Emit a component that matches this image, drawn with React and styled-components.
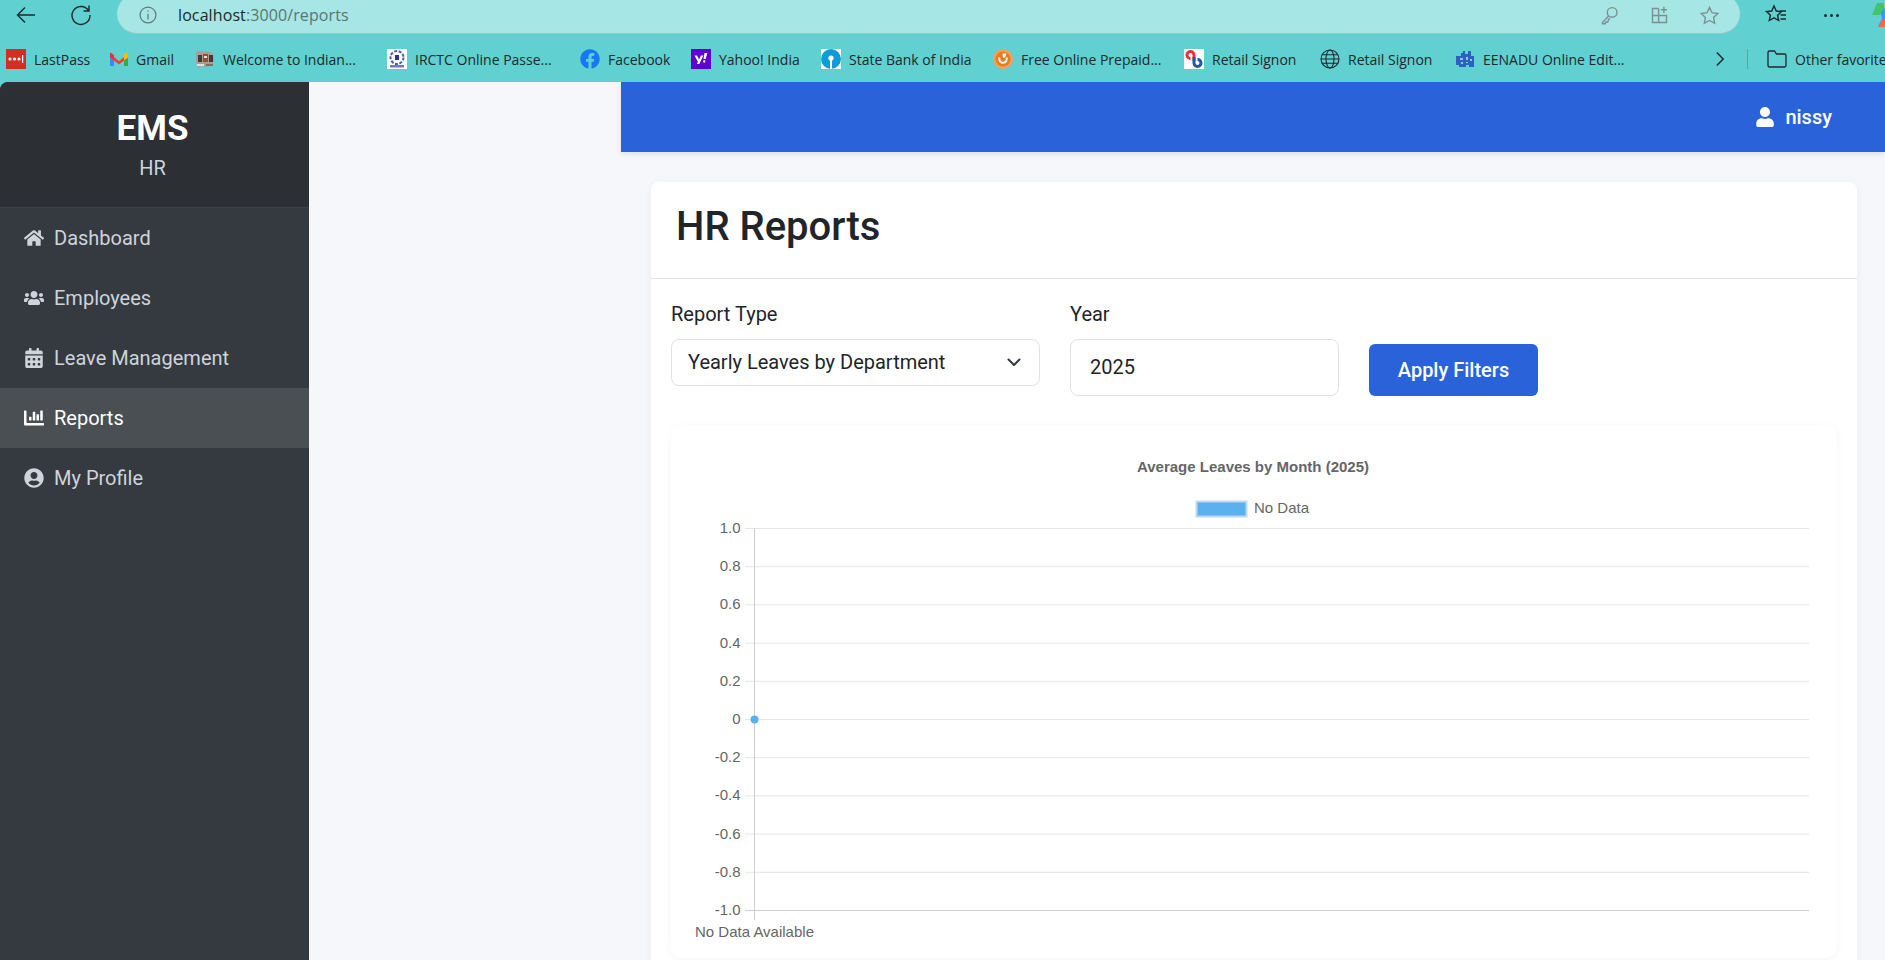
import React from 'react';
import styled, { createGlobalStyle } from 'styled-components';
import {
  FaHome, FaUsers, FaCalendarAlt, FaChartBar, FaUserCircle, FaUser, FaFacebook,
} from 'react-icons/fa';

const GlobalStyle = createGlobalStyle`
  * { box-sizing: border-box; }
  html, body { margin: 0; height: 100%; overflow: hidden; }
  body { font-family: Roboto, sans-serif; background: #60d0d0; }
`;

const navItems = [
  { label: 'Dashboard', icon: <FaHome /> },
  { label: 'Employees', icon: <FaUsers /> },
  { label: 'Leave Management', icon: <FaCalendarAlt /> },
  { label: 'Reports', icon: <FaChartBar />, active: true },
  { label: 'My Profile', icon: <FaUserCircle /> },
];

const LastPassIcon = () => (
  <svg width="20" height="20" viewBox="0 0 20 20">
    <rect width="20" height="20" y="0" fill="#d32d27" />
    <circle cx="4" cy="10" r="1.6" fill="#fff" />
    <circle cx="8.5" cy="10" r="1.6" fill="#fff" />
    <circle cx="13" cy="10" r="1.6" fill="#fff" />
    <rect x="16" y="6" width="1.2" height="8" fill="#fff" />
  </svg>
);

const GmailIcon = () => (
  <svg width="18" height="20" viewBox="0 0 18 20">
    <path d="M0 5v12h4V9z" fill="#4285f4" />
    <path d="M18 5v12h-4V9z" fill="#34a853" />
    <path d="M0 5l9 7 9-7v3.500l-9 7-9-7z" fill="#ea4335" />
    <path d="M14 5l4-2v5.500l-4 3z" fill="#fbbc04" />
    <path d="M0 3.500l4 2.500v5L0 8z" fill="#d33b2c" />
  </svg>
);

const WelcomeIcon = () => (
  <svg width="20" height="20" viewBox="0 0 20 20">
    <path d="M1 3l4-1 3 1 5-1 4 2 2 5-1 6-5 3-6-1-4 2-2-6z" fill="#a89e98" />
    <path d="M3 6h4v7H3zM14 6h4v7h-4z" fill="#473a36" />
    <rect x="8" y="5" width="5" height="8" fill="#a8443a" />
    <path d="M9 7h3v2H9zM2 15h7v2H2z" fill="#e6e0da" />
    <path d="M11 15h7v2h-7z" fill="#7c7068" />
  </svg>
);

const IrctcIcon = () => (
  <svg width="20" height="20" viewBox="0 0 20 20">
    <rect width="20" height="20" fill="#fff" />
    <circle cx="10" cy="8.500" r="6.500" fill="none" stroke="#4a5cb0" strokeWidth="2" strokeDasharray="3 1.500" />
    <rect x="8" y="6" width="4" height="5" fill="#27358f" />
    <rect x="3" y="16" width="14" height="2.500" fill="#6f7ab8" />
  </svg>
);

const YahooIcon = () => (
  <svg width="20" height="20" viewBox="0 0 20 20">
    <rect width="20" height="20" fill="#5f01d1" />
    <path d="M3.500 6.500h2.600l1.900 4 1.900-4h2.500l-4 8.500H5.900l1-2.300z" fill="#fff" />
    <path d="M13.500 4h2.800l-1.600 6h-2.200zM12.200 11.200h2v2.200h-2z" fill="#fff" />
  </svg>
);

const SbiIcon = () => (
  <svg width="20" height="20" viewBox="0 0 20 20">
    <rect width="20" height="20" fill="#fff" />
    <circle cx="10" cy="10" r="10" fill="#0f9bd7" />
    <circle cx="10" cy="9" r="2.600" fill="#fff" />
    <rect x="9" y="10" width="2" height="10" fill="#fff" />
  </svg>
);

const FreechargeIcon = () => (
  <svg width="20" height="20" viewBox="0 0 20 20">
    <circle cx="10" cy="10" r="10" fill="#f2a15a" />
    <circle cx="10" cy="10" r="7.500" fill="#ef7a1c" />
    <path d="M6.500 8.500a3.800 3.800 0 1 0 7 0" fill="none" stroke="#fff" strokeWidth="2" />
    <path d="M9.500 4.500h4l-1.500 4h-2z" fill="#fff" />
  </svg>
);

const RetailIcon = () => (
  <svg width="20" height="20" viewBox="0 0 20 20">
    <rect width="20" height="20" fill="#fff" />
    <path d="M10 12V6a3.500 3.500 0 1 0-7 0c0 2 1.500 3.500 3.500 3.500" fill="none" stroke="#e8323c" strokeWidth="3" />
    <path d="M10 8v6a3.500 3.500 0 1 0 7 0c0-2-1.500-3.500-3.500-3.500" fill="none" stroke="#1c5aa6" strokeWidth="3" />
  </svg>
);

const GlobeIcon = () => (
  <svg width="20" height="20" viewBox="0 0 20 20" fill="none" stroke="#1b2a2c" strokeWidth="1.100">
    <circle cx="10" cy="10" r="9" />
    <ellipse cx="10" cy="10" rx="4" ry="9" />
    <path d="M1 10h18M2.200 5.800h15.600M2.200 14.200h15.600" />
  </svg>
);

const EenaduIcon = () => (
  <svg width="20" height="20" viewBox="0 0 20 20">
    <path d="M1 7h5V4h2V2h2v3h3V2h3v5h3v11h-5v-2h-3v2H4v-2H1z" fill="#2a62c0" />
    <path d="M5 9h3v2H5zM11 8h2v3h-2zM15 10h2v2h-2zM6 13h2v2H6zM11 13h2v1h-2z" fill="#9ec0e8" />
  </svg>
);

const bookmarks = [
  { label: 'LastPass', width: 104, icon: <LastPassIcon /> },
  { label: 'Gmail', width: 85, icon: <GmailIcon /> },
  { label: 'Welcome to Indian...', width: 192, icon: <WelcomeIcon /> },
  { label: 'IRCTC Online Passe...', width: 193, icon: <IrctcIcon /> },
  { label: 'Facebook', width: 111, icon: <FaFacebook color="#1877f2" size={20} /> },
  { label: 'Yahoo! India', width: 130, icon: <YahooIcon /> },
  { label: 'State Bank of India', width: 172, icon: <SbiIcon /> },
  { label: 'Free Online Prepaid...', width: 191, icon: <FreechargeIcon /> },
  { label: 'Retail Signon', width: 136, icon: <RetailIcon /> },
  { label: 'Retail Signon', width: 135, icon: <GlobeIcon /> },
  { label: 'EENADU Online Edit...', width: 260, icon: <EenaduIcon /> },
];

const yTicks = ['1.0', '0.8', '0.6', '0.4', '0.2', '0', '-0.2', '-0.4', '-0.6', '-0.8', '-1.0'];

function LeavesChart() {
  const top = 103.5;
  const step = 38.2;
  return (
    <ChartSvg width="1166" height="533" viewBox="0 0 1166 533">
      <text x="582" y="46.500" textAnchor="middle" fontSize="15" fontWeight="700" fill="#666">
        Average Leaves by Month (2025)
      </text>
      <rect x="525.500" y="76.500" width="50" height="15" fill="#5bb0ee" stroke="#bcd9ef" strokeWidth="2" />
      <text x="583" y="88" fontSize="15" fill="#666">No Data</text>
      {yTicks.map((tick, i) => {
        const y = top + step * i;
        return (
          <g key={tick}>
            <line x1="74" x2="1138" y1={y} y2={y} stroke={i === 10 ? '#cfcfcf' : '#e5e5e5'} />
            <text x="69.500" y={y + 4.5} textAnchor="end" fontSize="15" fill="#666">{tick}</text>
          </g>
        );
      })}
      <line x1="83.500" x2="83.500" y1={top} y2="495" stroke="#cfcfcf" />
      <circle cx="83.500" cy={top + step * 5} r="4" fill="#5bb0ee" />
      <text x="83.500" y="512" textAnchor="middle" fontSize="15" fill="#666">No Data Available</text>
    </ChartSvg>
  );
}

function App() {
  return (
    <>
      <GlobalStyle />
      <Window>
        <BrowserChrome>
          <AddressRow>
            <ToolIcon viewBox="0 0 24 24">
              <path d="M21 12H4M11 4.500L3.500 12l7.500 7.500" />
            </ToolIcon>
            <ToolIcon viewBox="0 0 24 24" $left={31}>
              <path d="M19.500 7.500A9 9 0 1 0 21 12M20 2.500v5.500h-5.500" />
            </ToolIcon>
            <Omnibox>
              <InfoIcon viewBox="0 0 24 24">
                <circle cx="12" cy="12" r="9.500" />
                <path d="M12 10.500v7M12 6.500v1.600" />
              </InfoIcon>
              <Url>localhost<UrlRest>:3000/reports</UrlRest></Url>
              <OmniActions>
                <OmniIcon viewBox="0 0 24 24">
                  <circle cx="15" cy="8.500" r="5.500" />
                  <path d="M11 12.500L4 20v1.500h3l1-2h2l1-3 1.500-1.500M16 7h.1" />
                </OmniIcon>
                <OmniIcon viewBox="0 0 24 24">
                  <path d="M11 4H4v16h16v-8H4M11 4v16M17 2v7M13.500 5.500h7" />
                </OmniIcon>
                <OmniIcon viewBox="0 0 24 24">
                  <path d="M12 2.800l2.900 6 6.600.9-4.800 4.600 1.200 6.600-5.900-3.200-5.900 3.200 1.200-6.600-4.800-4.600 6.600-.9z" />
                </OmniIcon>
              </OmniActions>
            </Omnibox>
            <ToolIcon viewBox="0 0 24 24" $left={24}>
              <path d="M10 3l2.300 5 5.200.6-3.900 3.600 1.100 5.300L10 14.900l-4.700 2.600 1.100-5.300L2.500 8.600 7.700 8zM16 8h6M16.500 12h5.500M16.500 16h5.500" />
            </ToolIcon>
            <MoreDots>
              <i /><i /><i />
            </MoreDots>
            <CopilotIcon viewBox="0 0 26 26">
              <path d="M7 1h12l5 17-4 7H8l4-9z" fill="#2f9ce8" />
              <path d="M7 1h9l-6 12H2z" fill="#43c46c" />
              <path d="M14 1h6l4 10h-9z" fill="#e8d040" />
              <path d="M12 17h10l-2 8H9z" fill="#f0694f" />
            </CopilotIcon>
          </AddressRow>
          <BookmarkRow>
            {bookmarks.map((item, i) => (
              <Bookmark key={`${item.label}-${i}`} $width={item.width}>
                {item.icon}
                <span>{item.label}</span>
              </Bookmark>
            ))}
            <ChevronIcon viewBox="0 0 12 20"><path d="M2 2l8 8-8 8" /></ChevronIcon>
            <BarDivider />
            <Bookmark $width={120}>
              <FolderIcon viewBox="0 0 20 20">
                <path d="M1 16.500V3.500A1.500 1.500 0 0 1 2.500 2h5l2 3h8A1.500 1.500 0 0 1 19 6.500v10a1.500 1.500 0 0 1-1.500 1.500h-15A1.500 1.500 0 0 1 1 16.500z" />
              </FolderIcon>
              <span>Other favorites</span>
            </Bookmark>
          </BookmarkRow>
        </BrowserChrome>

        <Page>
          <Sidebar>
            <SidebarHeader>
              <Brand>EMS</Brand>
              <Role>HR</Role>
            </SidebarHeader>
            <Nav>
              {navItems.map((item) => (
                <NavItem key={item.label} $active={item.active}>
                  <NavIcon>{item.icon}</NavIcon>
                  {item.label}
                </NavItem>
              ))}
            </Nav>
          </Sidebar>

          <Main>
            <TopBar>
              <UserName><FaUser />nissy</UserName>
            </TopBar>
            <Content>
              <Card>
                <CardHeader><Title>HR Reports</Title></CardHeader>
                <CardBody>
                  <Filters>
                    <Field $width={369}>
                      <Label>Report Type</Label>
                      <SelectBox>
                        Yearly Leaves by Department
                        <svg width="16" height="16" viewBox="0 0 16 16" fill="none" stroke="#343a40" strokeWidth="2" strokeLinecap="round" strokeLinejoin="round">
                          <path d="M2.500 5.500L8 11l5.500-5.500" />
                        </svg>
                      </SelectBox>
                    </Field>
                    <Field $width={269}>
                      <Label>Year</Label>
                      <YearInput readOnly value="2025" />
                    </Field>
                    <ApplyButton>Apply Filters</ApplyButton>
                  </Filters>
                  <ChartCard>
                    <LeavesChart />
                  </ChartCard>
                </CardBody>
              </Card>
            </Content>
          </Main>
        </Page>
      </Window>
    </>
  );
}

const Window = styled.div`
  width: 1885px;
  height: 960px;
  display: flex;
  flex-direction: column;
  overflow: hidden;
`;

const BrowserChrome = styled.header`
  height: 82px;
  flex: none;
  background: #60d0d0;
  font-family: 'Open Sans', sans-serif;
  color: #1b2a2c;
`;

const AddressRow = styled.div`
  height: 34px;
  padding: 0 0 4px 14px;
  display: flex;
  align-items: center;
`;

const ToolIcon = styled.svg`
  width: 24px;
  height: 24px;
  flex: none;
  margin-left: ${(p) => p.$left || 0}px;
  fill: none;
  stroke: #1b2a2c;
  stroke-width: 1.4;
`;

const Omnibox = styled.div`
  width: 1623px;
  height: 40px;
  flex: none;
  align-self: flex-start;
  margin: -6px 0 0 24px;
  padding: 6px 20px 3px 21px;
  display: flex;
  align-items: center;
  background: #a6e6e4;
  border-bottom: 1px solid #93c9c9;
  border-radius: 20px;
`;

const InfoIcon = styled.svg`
  width: 20px;
  height: 20px;
  fill: none;
  stroke: #5f7a7a;
  stroke-width: 1.5;
`;

const Url = styled.span`
  margin-left: 20px;
  font-size: 16px;
  letter-spacing: 0.1px;
  color: #1b2a2c;
`;

const UrlRest = styled.span`
  color: #5c7474;
`;

const OmniActions = styled.div`
  margin-left: auto;
  display: flex;
  gap: 29px;
`;

const OmniIcon = styled.svg`
  width: 21px;
  height: 21px;
  fill: none;
  stroke: #7c9090;
  stroke-width: 1.6;
`;

const MoreDots = styled.div`
  margin-left: 36px;
  display: flex;
  gap: 3px;

  i {
    width: 3px;
    height: 3px;
    border-radius: 50%;
    background: #1b2a2c;
  }
`;

const CopilotIcon = styled.svg`
  width: 26px;
  height: 26px;
  flex: none;
  margin-left: 31px;
`;

const BookmarkRow = styled.nav`
  height: 48px;
  padding: 2px 0 0 6px;
  display: flex;
  align-items: center;
  overflow: hidden;
`;

const Bookmark = styled.a`
  width: ${(p) => p.$width}px;
  flex: none;
  display: flex;
  align-items: center;
  gap: 8px;
  font-size: 14px;
  white-space: nowrap;

  svg { flex: none; }
`;

const ChevronIcon = styled.svg`
  width: 10px;
  height: 16px;
  flex: none;
  fill: none;
  stroke: #1b2a2c;
  stroke-width: 1.8;
`;

const BarDivider = styled.span`
  width: 1px;
  height: 20px;
  flex: none;
  margin: 0 19px 0 22px;
  background: #6c9c9c;
`;

const FolderIcon = styled.svg`
  width: 20px;
  height: 20px;
  fill: none;
  stroke: #1b2a2c;
  stroke-width: 1.3;
`;

const Page = styled.div`
  flex: 1;
  min-height: 0;
  display: flex;
  background: #f5f7fb;
  border-top-left-radius: 8px;
  overflow: hidden;
`;

const Sidebar = styled.aside`
  width: 309px;
  flex: none;
  background: #343a40;
`;

const SidebarHeader = styled.div`
  height: 126px;
  padding: 23px 4px 0 0;
  text-align: center;
  background: #2c2f33;
  border-bottom: 1px solid #3d4349;
`;

const Brand = styled.div`
  font-size: 35px;
  font-weight: 700;
  line-height: 48px;
  color: #fff;
`;

const Role = styled.div`
  margin-top: 2px;
  font-size: 20px;
  line-height: 26px;
  color: #ced4da;
`;

const Nav = styled.nav`
  display: flex;
  flex-direction: column;
`;

const NavItem = styled.a`
  height: 60px;
  padding-left: 24px;
  display: flex;
  align-items: center;
  font-size: 20px;
  color: ${(p) => (p.$active ? '#fff' : '#ced4da')};
  background: ${(p) => (p.$active ? '#4a4f53' : 'transparent')};
`;

const NavIcon = styled.span`
  width: 20px;
  height: 20px;
  margin-right: 10px;
  display: flex;

  svg {
    width: 20px;
    height: 20px;
  }
`;

const Main = styled.main`
  flex: 1;
  min-width: 0;
  margin-left: 312px;
`;

const TopBar = styled.div`
  height: 70px;
  padding-right: 53px;
  display: flex;
  align-items: center;
  justify-content: flex-end;
  background: #2962d9;
  box-shadow: 0 2px 6px rgba(0, 0, 0, 0.1);
`;

const UserName = styled.div`
  display: flex;
  align-items: center;
  gap: 10px;
  font-size: 20px;
  font-weight: 500;
  color: #fff;
`;

const Content = styled.div`
  padding: 30px 28px 0 30px;
`;

const Card = styled.section`
  background: #fff;
  border-radius: 8px;
  box-shadow: 0 2px 8px rgba(0, 0, 0, 0.05);
`;

const CardHeader = styled.div`
  height: 97px;
  padding: 0 0 7px 25px;
  display: flex;
  align-items: center;
  border-bottom: 1px solid #e3e3e6;
`;

const Title = styled.h1`
  margin: 0;
  font-size: 40px;
  font-weight: 500;
  color: #212529;
`;

const CardBody = styled.div`
  padding: 23px 20px;
`;

const Filters = styled.div`
  display: flex;
  align-items: flex-start;
  gap: 30px;
`;

const Field = styled.div`
  width: ${(p) => p.$width}px;
`;

const Label = styled.label`
  display: block;
  margin-bottom: 13px;
  font-size: 20px;
  line-height: 24px;
  color: #212529;
`;

const SelectBox = styled.div`
  height: 47px;
  padding: 0 17px 2px 16px;
  display: flex;
  align-items: center;
  justify-content: space-between;
  font-size: 20px;
  color: #212529;
  background: #fff;
  border: 1px solid #dee2e6;
  border-radius: 8px;
`;

const YearInput = styled.input`
  width: 100%;
  height: 57px;
  padding: 0 19px 2px;
  font-family: Roboto, sans-serif;
  font-size: 20px;
  color: #212529;
  background: #fff;
  border: 1px solid #dee2e6;
  border-radius: 8px;
  outline: none;
`;

const ApplyButton = styled.button`
  width: 169px;
  height: 52px;
  margin-top: 42px;
  font-family: Roboto, sans-serif;
  font-size: 20px;
  font-weight: 500;
  color: #fff;
  background: #2962d9;
  border: none;
  border-radius: 6px;
`;

const ChartCard = styled.div`
  width: 1166px;
  margin-top: 29px;
  background: #fff;
  border-radius: 12px;
  box-shadow: 0 2px 10px rgba(0, 0, 0, 0.04);
`;

const ChartSvg = styled.svg`
  display: block;
  font-family: 'Liberation Sans', Arial, sans-serif;
`;

export default App;
